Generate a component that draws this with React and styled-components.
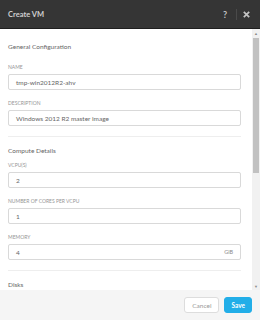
import React from 'react';
import styled, { createGlobalStyle } from 'styled-components';

const GlobalStyle = createGlobalStyle`
    html, body {
        margin: 0;
        padding: 0;
        background: #ffffff;
    }
    body {
        font-family: Lato, "Open Sans", "Liberation Sans", sans-serif;
    }
`;

const fields = [
    { section: 'General Configuration', gap: 13, items: [
        { label: 'Name', value: 'tmp-win2012R2-ahv' },
        { label: 'Description', value: 'Windows 2012 R2 master image' },
    ] },
    { section: 'Compute Details', gap: 7, items: [
        { label: 'vCPU(s)', value: '2' },
        { label: 'Number of cores per vCPU', value: '1' },
        { label: 'Memory', value: '4', unit: 'GiB' },
    ] },
];

const App = () => {
    return (
        <Modal>
            <GlobalStyle />
            <Header>
                <Title>Create VM</Title>
                <HeaderActions>
                    <HelpButton>?</HelpButton>
                    <Separator />
                    <CloseButton>
                        <svg width="7" height="7" viewBox="0 0 7 7">
                            <path d="M0.8 0.8 L6.2 6.2 M6.2 0.8 L0.8 6.2" stroke="#c4c4c4" strokeWidth="1.7" />
                        </svg>
                    </CloseButton>
                </HeaderActions>
            </Header>
            <Body>
                <Content>
                    {fields.map((group) => (
                        <Section key={group.section}>
                            <SectionTitle gap={group.gap}>{group.section}</SectionTitle>
                            {group.items.map((f) => (
                                <Field key={f.label}>
                                    <Label>{f.label}</Label>
                                    <Input>
                                        <span>{f.value}</span>
                                        {f.unit && <Unit>{f.unit}</Unit>}
                                    </Input>
                                </Field>
                            ))}
                        </Section>
                    ))}
                    <Section>
                        <SectionTitle gap={6}>Disks</SectionTitle>
                    </Section>
                </Content>
                <Scrollbar>
                    <Arrow>▲</Arrow>
                    <Track>
                        <Thumb />
                    </Track>
                    <Arrow>▼</Arrow>
                </Scrollbar>
            </Body>
            <Footer>
                <Button>Cancel</Button>
                <Button primary>Save</Button>
            </Footer>
        </Modal>
    );
};

export default App;

const Modal = styled.div`
    width: 260px;
    height: 320px;
    display: flex;
    flex-direction: column;
    overflow: hidden;
`;

const Header = styled.div`
    height: 28px;
    flex-shrink: 0;
    background: #353535;
    border-bottom: 1px solid #1e1e1e;
    display: flex;
    align-items: center;
    justify-content: space-between;
    padding: 0 10px 0 8px;
`;

const Title = styled.div`
    color: #d0d0d0;
    font-size: 7.5px;
    font-weight: 700;
`;

const HeaderActions = styled.div`
    display: flex;
    align-items: center;
`;

const HelpButton = styled.div`
    color: #c4c4c4;
    font-size: 9px;
    font-weight: 700;
    width: 10px;
    text-align: center;
`;

const Separator = styled.div`
    width: 1px;
    height: 11px;
    background: #4a4a4a;
    margin: 0 6px;
`;

const CloseButton = styled.div`
    display: flex;
    align-items: center;
`;

const Body = styled.div`
    flex: 1;
    display: flex;
    min-height: 0;
`;

const Content = styled.div`
    flex: 1;
    overflow: hidden;
    padding: 4px 11px 0 8px;
`;

const Section = styled.div`
    padding: 9px 0 10px;
    border-bottom: 1px solid #eeeeee;

    &:last-child {
        border-bottom: none;
    }
`;

const SectionTitle = styled.div`
    color: #666666;
    font-size: 6.5px;
    line-height: 9px;
    margin-bottom: ${(p) => p.gap}px;
`;

const Field = styled.div`
    margin-bottom: 10px;

    &:last-child {
        margin-bottom: 0;
    }
`;

const Label = styled.div`
    color: #959595;
    font-size: 5px;
    line-height: 6px;
    text-transform: uppercase;
    margin-bottom: 4px;
`;

const Input = styled.div`
    height: 16px;
    box-sizing: border-box;
    border: 1px solid #d9d9d9;
    border-radius: 2px;
    padding: 0 7px;
    display: flex;
    align-items: center;
    justify-content: space-between;
    color: #666666;
    font-size: 6.5px;
`;

const Unit = styled.span`
    color: #8a8a8a;
    font-size: 5.5px;
`;

const Scrollbar = styled.div`
    width: 8px;
    background: #f1f1f1;
    display: flex;
    flex-direction: column;
`;

const Arrow = styled.div`
    height: 8px;
    font-size: 4px;
    color: #8a8a8a;
    display: flex;
    align-items: center;
    justify-content: center;
`;

const Track = styled.div`
    flex: 1;
    padding: 1px 0;
`;

const Thumb = styled.div`
    height: 135px;
    margin: 0 1px;
    background: #c1c1c1;
`;

const Footer = styled.div`
    height: 30px;
    flex-shrink: 0;
    background: #f5f5f5;
    display: flex;
    align-items: center;
    justify-content: flex-end;
    gap: 5px;
    padding: 0 8px;
`;

const Button = styled.div`
    height: 16px;
    box-sizing: border-box;
    padding: 0 ${(p) => (p.primary ? '6px' : '7px')};
    border-radius: 3px;
    border: 1px solid ${(p) => (p.primary ? '#22aee8' : '#dddddd')};
    background: ${(p) => (p.primary ? '#22aee8' : '#ffffff')};
    color: ${(p) => (p.primary ? '#ffffff' : '#999999')};
    font-size: 6.5px;
    font-weight: ${(p) => (p.primary ? 700 : 400)};
    display: flex;
    align-items: center;
`;
